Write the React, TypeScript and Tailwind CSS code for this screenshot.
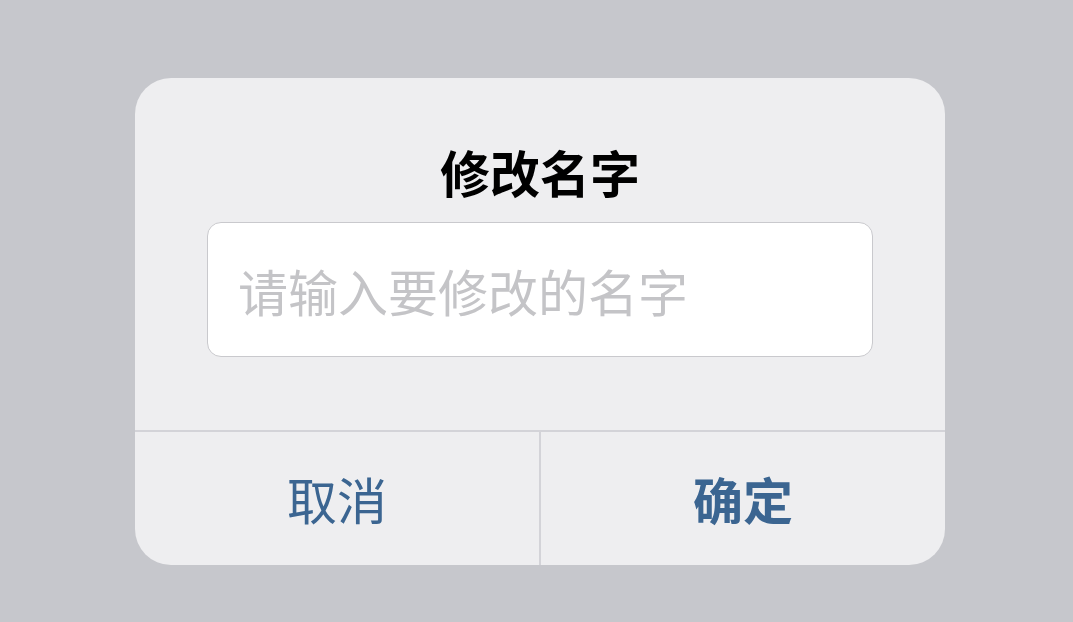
import React, { useState } from 'react';

const fontStack = { fontFamily: '"Noto Sans CJK SC", "Noto Sans", sans-serif' };

const RenameDialog: React.FC = () => {
  const [name, setName] = useState('');

  return (
    <div className="w-[810px] bg-[#eeeef0] rounded-[36px] overflow-hidden flex flex-col">
      <div className="flex flex-col items-center pt-[68px] pb-[73px] px-[72px]">
        <h2 className="text-[50px] leading-[50px] font-bold text-black">修改名字</h2>
        <input
          value={name}
          onChange={(e) => setName(e.target.value)}
          placeholder="请输入要修改的名字"
          className="mt-[26px] w-full h-[135px] bg-white border border-[#c9c9cd] rounded-[14px] px-[30px] text-[50px] text-black outline-none placeholder:text-[#c4c4c7]"
          style={fontStack}
        />
      </div>
      <div className="flex h-[135px] border-t-2 border-[#d3d3d8]">
        <button className="flex-1 flex items-center justify-center text-[50px] text-[#3b6591] border-r-2 border-[#d3d3d8]">
          取消
        </button>
        <button className="flex-1 flex items-center justify-center text-[50px] font-bold text-[#3b6591]">
          确定
        </button>
      </div>
    </div>
  );
};

export default function App() {
  return (
    <div className="w-[1073px] h-[622px] bg-[#c6c7cc] flex items-start pl-[135px] pt-[78px]" style={fontStack}>
      <RenameDialog />
    </div>
  );
}
